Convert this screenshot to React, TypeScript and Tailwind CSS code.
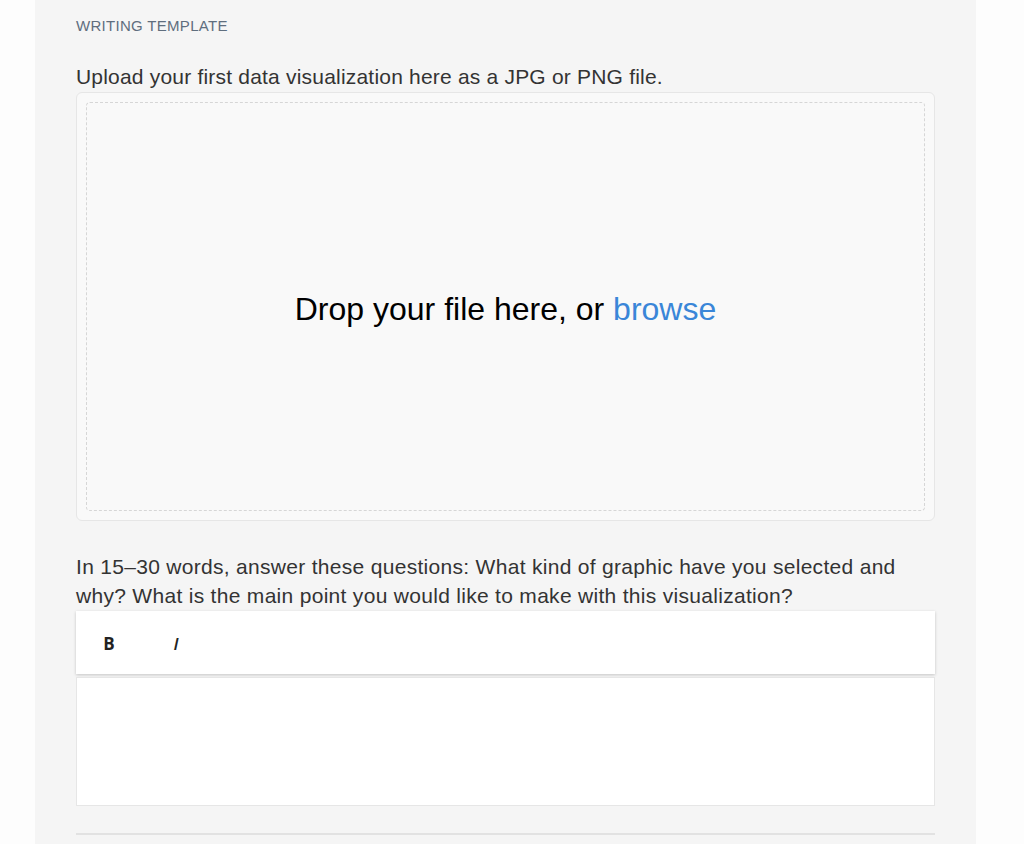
import React from 'react';

// Writing template panel: upload dropzone + short answer editor
export default function App() {
  return (
    <div className="min-h-[844px] w-full bg-[#fdfdfd] font-['Liberation_Sans',Arial,sans-serif]">
      <div className="mx-[35px] mr-[48px] min-h-[844px] bg-[#f5f5f5] px-[41px] pt-[18px]">
        <div className="text-[15px] leading-[16px] tracking-[0.3px] text-[#5f6e7e]">WRITING TEMPLATE</div>

        <p className="mt-[32px] text-[21px] leading-[22px] tracking-[0.2px] text-[#333]">
          Upload your first data visualization here as a JPG or PNG file.
        </p>

        <div className="mt-[4px] h-[429px] rounded-[6px] border border-[#e6e6e6] bg-[#f9f9f9] p-[9px]">
          <div className="flex h-full items-center justify-center rounded-[4px] border border-dashed border-[#d6d6d6]">
            <span className="mt-[4px] text-[32px] leading-[36px] text-black">
              Drop your file here, or <span className="text-[#3a86d8]">browse</span>
            </span>
          </div>
        </div>

        <p className="mt-[31px] text-[21px] leading-[29px] tracking-[0.3px] text-[#333]">
          In 15–30 words, answer these questions: What kind of graphic have you selected and
          why? What is the main point you would like to make with this visualization?
        </p>

        <div className="mt-[1px] flex h-[63px] items-center bg-white pl-[26px] pt-[3px] shadow-[0_1px_3px_rgba(0,0,0,0.2)]">
          <button
            type="button"
            className="w-[14px] font-['Open_Sans',sans-serif] text-[17px] font-bold text-[#222]"
          >
            B
          </button>
          <button
            type="button"
            className="ml-[53px] w-[14px] font-['Open_Sans',sans-serif] text-[17px] font-semibold italic text-[#222]"
          >
            I
          </button>
        </div>

        <div className="mt-[3px] h-[129px] border border-[#e6e6e6] bg-white" />

        <div className="mt-[27px] h-[2px] bg-[#e2e2e2]" />
      </div>
    </div>
  );
}
